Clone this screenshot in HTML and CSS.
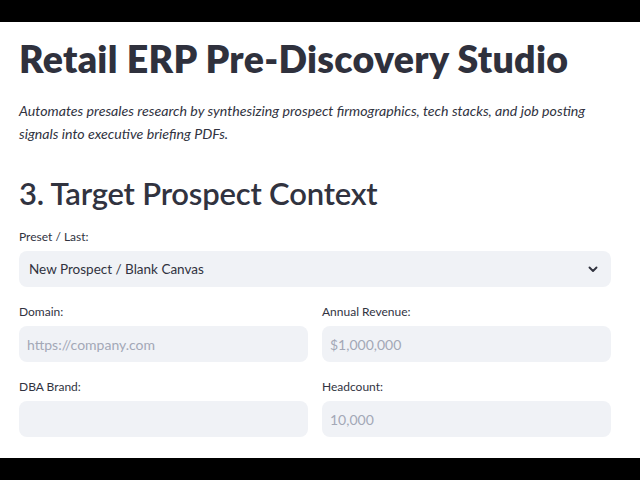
FILE: index.html
```html
<!DOCTYPE html>
<html lang="en">
<head>
<meta charset="utf-8">
<title>Retail ERP Pre-Discovery Studio</title>
<link rel="stylesheet" href="styles.css">
</head>
<body>
<div class="letterbox-top"></div>
<main class="main">
  <h1 class="title">Retail ERP Pre-Discovery Studio</h1>
  <p class="subtitle">Automates presales research by synthesizing prospect firmographics, tech stacks, and job posting signals into executive briefing PDFs.</p>
  <h2 class="section">3. Target Prospect Context</h2>

  <div class="field">
    <label class="label">Preset / Last:</label>
    <div class="select">
      <span class="select-value">New Prospect / Blank Canvas</span>
      <svg class="chevron" width="14" height="14" viewBox="0 0 14 14" aria-hidden="true"><path d="M3.5 5.5 L7 9 L10.5 5.5" fill="none" stroke="#31333F" stroke-width="1.9" stroke-linecap="round" stroke-linejoin="round"/></svg>
    </div>
  </div>

  <div class="grid">
    <div class="field">
      <label class="label">Domain:</label>
      <div class="input"><span class="placeholder">https://company.com</span></div>
    </div>
    <div class="field">
      <label class="label">Annual Revenue:</label>
      <div class="input"><span class="placeholder">$1,000,000</span></div>
    </div>
    <div class="field">
      <label class="label">DBA Brand:</label>
      <div class="input"></div>
    </div>
    <div class="field">
      <label class="label">Headcount:</label>
      <div class="input"><span class="placeholder">10,000</span></div>
    </div>
  </div>

  <div class="field field-next">
    <label class="label">Additional Context:</label>
    <div class="input"></div>
  </div>
</main>
<div class="letterbox-bottom"></div>
</body>
</html>
```

FILE: styles.css
```css
html, body {
  margin: 0;
  padding: 0;
  background: #ffffff;
  overflow: hidden;
}

body {
  font-family: "Lato", "Noto Sans", sans-serif;
  color: #31333F;
  width: 640px;
  height: 480px;
}

.letterbox-top {
  height: 22px;
  background: #000000;
}

.letterbox-bottom {
  position: fixed;
  left: 0;
  right: 0;
  bottom: 0;
  height: 22px;
  background: #000000;
}

.main {
  padding: 0 29px 0 19px;
}

.title {
  margin: 15px 0 0 0;
  font-size: 37.5px;
  line-height: 44px;
  font-weight: 800;
  letter-spacing: 0.3px;
  color: #2f313d;
}

.subtitle {
  margin: 18px 0 0 0;
  font-size: 14.2px;
  line-height: 23px;
  font-style: italic;
  font-weight: 400;
}

.section {
  margin: 30px 0 0 0;
  font-size: 31px;
  line-height: 36px;
  font-weight: 600;
  letter-spacing: -0.2px;
}

.field {
  display: flex;
  flex-direction: column;
}

.section + .field {
  margin-top: 17px;
}

.label {
  font-size: 12px;
  line-height: 18px;
  margin-bottom: 5px;
}

.select {
  height: 36px;
  background: #F0F2F6;
  border-radius: 8px;
  display: flex;
  align-items: center;
  justify-content: space-between;
  padding: 0 11px 0 10px;
  font-size: 13.5px;
}

.chevron {
  display: block;
}

.grid {
  margin-top: 16px;
  display: grid;
  grid-template-columns: 1fr 1fr;
  column-gap: 14px;
  row-gap: 16px;
}

.field-next {
  margin-top: 20px;
}

.input {
  height: 36px;
  background: #F0F2F6;
  border-radius: 8px;
  display: flex;
  align-items: center;
  padding: 0 8px;
  font-size: 14px;
}

.placeholder {
  color: #A3A8B6;
}
```
